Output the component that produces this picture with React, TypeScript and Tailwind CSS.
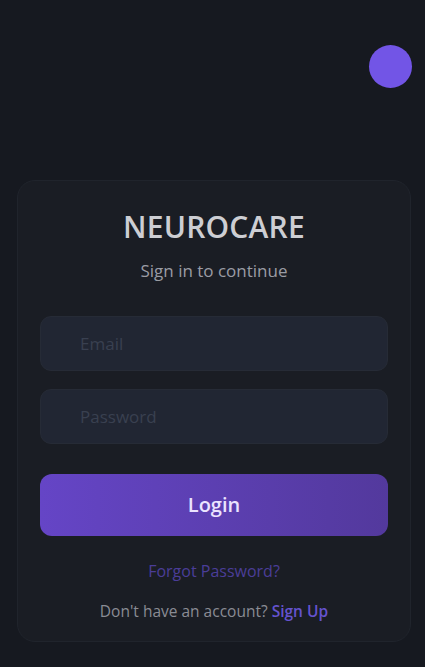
import React from "react";

export default function App() {
  return (
    <div
      className="relative min-h-[667px] w-full bg-[#161920] pt-[180px]"
      style={{ fontFamily: '"Open Sans", "Noto Sans", sans-serif' }}
    >
      <div className="absolute right-[13px] top-[45px] h-[43px] w-[43px] rounded-full bg-[#7255e6]" />
      <div className="ml-[17px] w-[394px] rounded-[18px] border border-[#20242c] bg-[#1a1d24] px-[22px] pb-[18px] pt-[28px]">
        <h1 className="text-center text-[30px] font-semibold leading-[36px] tracking-[0.2px] text-[#cdced3]">
          NEUROCARE
        </h1>
        <p className="mt-[14px] text-center text-[17px] leading-[24px] text-[#9a9ca4]">
          Sign in to continue
        </p>
        <div className="mt-[33px] flex flex-col gap-[18px]">
          <div className="flex h-[55px] items-center rounded-[11px] border border-[#262b36] bg-[#212633] pl-[39px] text-[17px] text-[#394050]">
            Email
          </div>
          <div className="flex h-[55px] items-center rounded-[11px] border border-[#262b36] bg-[#212633] pl-[39px] text-[17px] text-[#394050]">
            Password
          </div>
        </div>
        <button className="mt-[30px] flex h-[62px] w-full items-center justify-center rounded-[12px] bg-gradient-to-r from-[#6545c6] to-[#53399d] text-[20px] font-semibold text-[#ebe4ff]">
          Login
        </button>
        <p className="mt-[23px] text-center text-[16px] leading-[24px] text-[#4b3d98]">
          Forgot Password?
        </p>
        <p className="mt-[16px] text-center text-[15.5px] leading-[24px] text-[#8a8c94]">
          Don't have an account?{" "}
          <span className="font-semibold text-[#6553cf]">Sign Up</span>
        </p>
      </div>
    </div>
  );
}
